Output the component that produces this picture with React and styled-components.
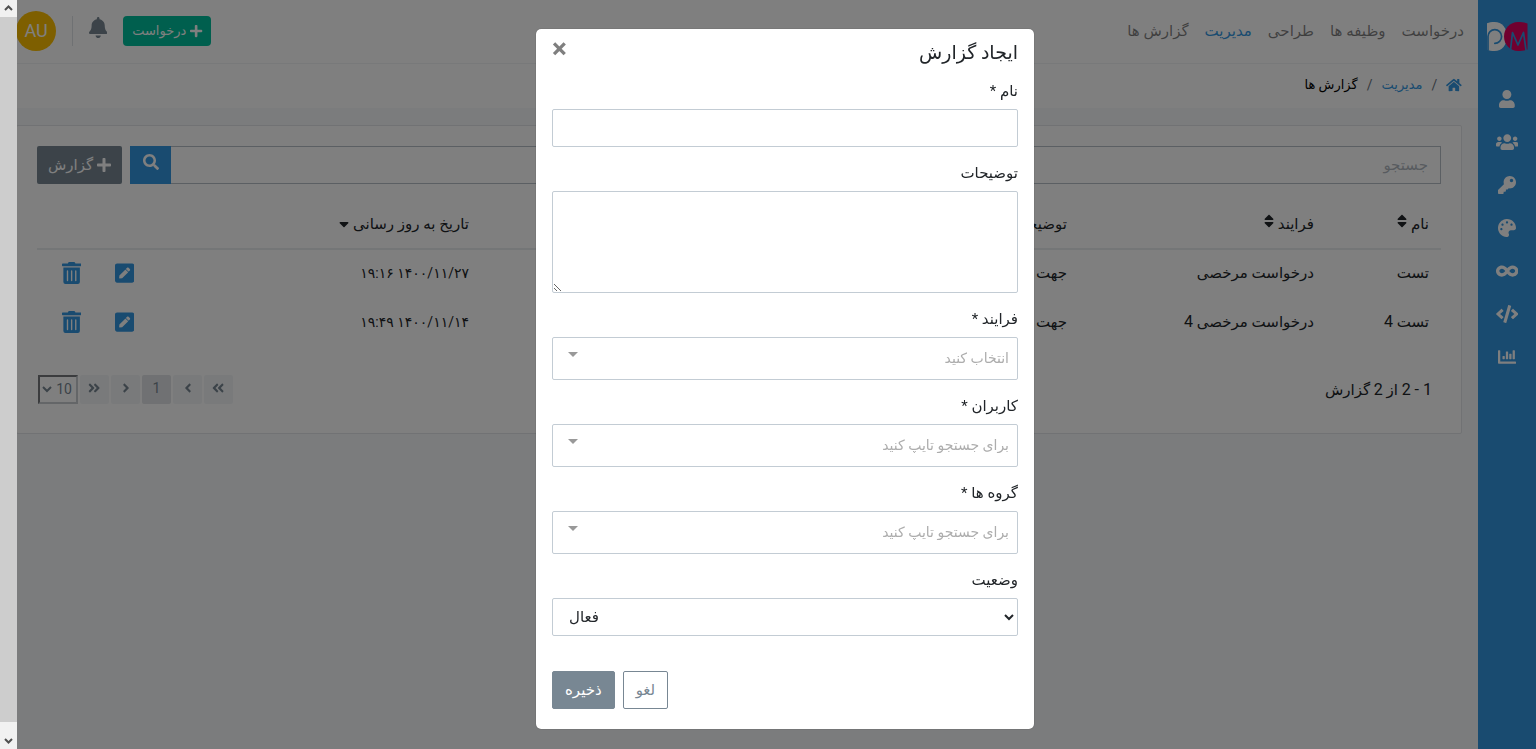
import { useState } from "react";
import styled, { createGlobalStyle } from "styled-components";
import {
  FaAngleDoubleLeft,
  FaAngleDoubleRight,
  FaAngleLeft,
  FaAngleRight,
  FaBell,
  FaChartBar,
  FaCode,
  FaHome,
  FaInfinity,
  FaKey,
  FaPalette,
  FaPenSquare,
  FaPlus,
  FaSearch,
  FaSort,
  FaSortDown,
  FaTrashAlt,
  FaUser,
  FaUsers,
} from "react-icons/fa";

const GlobalStyle = createGlobalStyle`
  * {
    box-sizing: border-box;
  }
  body {
    margin: 0;
    overflow: hidden;
    background: #f7f9fa;
    color: #212529;
    font-family: Roboto, "DejaVu Sans", sans-serif;
    font-size: 15px;
    line-height: 24px;
  }
  button, input, select, textarea {
    font-family: inherit;
    font-size: inherit;
    line-height: inherit;
    margin: 0;
  }
  button {
    cursor: pointer;
  }
  a {
    text-decoration: none;
  }
  /* keep the natural width of every icon */
  svg[viewBox="0 0 640 512"] {
    width: 1.25em;
  }
  svg[viewBox="0 0 576 512"] {
    width: 1.125em;
  }
  svg[viewBox="0 0 448 512"] {
    width: 0.875em;
  }
  svg[viewBox="0 0 320 512"] {
    width: 0.625em;
  }
`;

const Page = styled.div`
  display: flex;
  min-height: 100vh;
`;

const Sidebar = styled.nav`
  display: flex;
  flex-direction: column;
  align-items: center;
  width: 58px;
  padding-top: 22px;
  background: #3397e1;
`;

const LogoLink = styled.a`
  display: flex;
  margin-bottom: 26px;
`;

const SideLink = styled.a`
  display: flex;
  align-items: center;
  justify-content: center;
  width: 100%;
  height: 43px;
  color: #fff;
  font-size: 18px;
`;

const Main = styled.div`
  flex: 1;
  min-width: 0;
`;

const Header = styled.header`
  display: flex;
  align-items: center;
  justify-content: space-between;
  height: 64px;
  padding: 0 14px 2px 16px;
  background: #fff;
  border-bottom: 1px solid #f0f2f4;
`;

const Menu = styled.nav`
  display: flex;
  gap: 16px;
`;

const MenuLink = styled.a`
  color: ${(props) => (props.$active ? "#3397e1" : "rgba(0, 0, 0, 0.5)")};
`;

const HeaderTools = styled.div`
  display: flex;
  align-items: center;
`;

const RequestButton = styled.button`
  display: flex;
  align-items: center;
  justify-content: center;
  gap: 4px;
  min-width: 88px;
  height: 30px;
  padding: 0 8px;
  border: 0;
  border-radius: 4px;
  background: #00bf9c;
  color: #fff;
  font-size: 13px;
  svg {
    font-size: 14px;
  }
`;

const BellButton = styled.button`
  display: flex;
  margin: 0 16px 6px;
  padding: 0;
  border: 0;
  background: none;
  color: #788793;
  font-size: 21px;
`;

const Avatar = styled.div`
  display: flex;
  align-items: center;
  justify-content: center;
  width: 40px;
  height: 40px;
  margin-right: 16px;
  border-radius: 50%;
  background: #fcbe00;
  color: #fff;
  font-size: 18px;
`;

const Divider = styled.span`
  width: 1px;
  height: 30px;
  background: #dee2e6;
`;

const Breadcrumb = styled.nav`
  display: flex;
  align-items: center;
  gap: 9px;
  height: 44px;
  padding: 0 16px 2px;
  background: #fff;
  color: #6c757d;
  font-size: 13px;
  a {
    display: flex;
    color: #3397e1;
  }
  svg {
    font-size: 14px;
  }
`;

const Current = styled.span`
  color: #000;
`;

const Slash = styled.span`
  font-size: 14px;
`;

const Card = styled.section`
  margin: 17px 16px;
  padding: 20px 20px 29px;
  border: 1px solid #e2e5e8;
  border-radius: 2px;
  background: #fff;
`;

const SearchRow = styled.form`
  display: flex;
  height: 38px;
  margin-bottom: 15px;
`;

const SearchInput = styled.input`
  flex: 1;
  min-width: 0;
  padding: 0 12px;
  border: 1px solid #b6bfc6;
  border-left: 0;
  background: #fff;
  &::placeholder {
    color: #b0b7be;
  }
`;

const SearchButton = styled.button`
  width: 41px;
  padding: 0;
  border: 0;
  background: #3397e1;
  color: #fff;
  font-size: 16px;
`;

const AddButton = styled.button`
  display: flex;
  align-items: center;
  justify-content: center;
  gap: 4px;
  min-width: 85px;
  margin-right: 8px;
  padding: 0 11px;
  border: 0;
  border-radius: 2px;
  background: #788793;
  color: #fff;
  svg {
    font-size: 16px;
  }
`;

const Table = styled.table`
  width: 100%;
  table-layout: fixed;
  border-collapse: collapse;
`;

const Col = styled.col`
  width: ${(props) => props.$width};
`;

const Th = styled.th`
  height: 50px;
  padding: 0 12px;
  border-bottom: 2px solid #e9ecef;
  font-weight: normal;
  text-align: right;
  white-space: nowrap;
  svg {
    font-size: 16px;
    vertical-align: baseline;
  }
`;

const Td = styled.td`
  height: 50px;
  padding: 0 12px 4px;
  white-space: nowrap;
`;

const DateText = styled.span`
  font-size: 14px;
`;

const Latin = styled.span`
  font-size: 16px;
`;

const Actions = styled.div`
  display: flex;
  justify-content: flex-end;
  gap: 8px;
`;

const ActionButton = styled.button`
  display: flex;
  justify-content: center;
  width: 45px;
  padding: 0;
  border: 0;
  background: none;
  color: #3397e1;
  font-size: 22px;
`;

const TableFooter = styled.div`
  display: flex;
  align-items: center;
  justify-content: space-between;
  margin-top: 26px;
  padding: 0 9px 0 1px;
`;

const Pager = styled.div`
  display: flex;
  gap: 2px;
`;

const PageButton = styled.button`
  display: flex;
  align-items: center;
  justify-content: center;
  width: 29px;
  height: 29px;
  padding: 0 0 4px;
  border: 0;
  border-radius: 2px;
  background: ${(props) => (props.$active ? "#e0e3e6" : "#f3f5f7")};
  color: #788793;
  font-size: 14px;
`;

const PageSize = styled.select`
  width: 40px;
  height: 29px;
  padding: 0 0 2px;
  border: 2px inset #c8ccd0;
  background: #fff;
  color: #788793;
  font-size: 14px;
`;

const Backdrop = styled.div`
  position: fixed;
  inset: 0 0 0 17px;
  display: flex;
  align-items: flex-start;
  justify-content: center;
  padding: 29px 0 0 17px;
  background: rgba(0, 0, 0, 0.5);
`;

const Modal = styled.form`
  width: 498px;
  padding: 9px 16px 20px;
  border-radius: 5px;
  background: #fff;
  box-shadow: 0 0 1px rgba(0, 0, 0, 0.6);
`;

const ModalHeader = styled.div`
  display: flex;
  align-items: flex-start;
  justify-content: space-between;
  height: 43px;
`;

const ModalTitle = styled.h5`
  margin: 0;
  font-size: 19px;
  font-weight: normal;
  line-height: 30px;
`;

const CloseButton = styled.button`
  padding: 0;
  border: 0;
  background: none;
  color: #7f7f7f;
  font-size: 28px;
  font-weight: bold;
  line-height: 22px;
`;

const Group = styled.div`
  margin-bottom: 16px;
`;

const Label = styled.label`
  display: block;
  margin-bottom: 8px;
  line-height: 20px;
`;

const TextInput = styled.input`
  display: block;
  width: 100%;
  height: 38px;
  padding: 6px 12px;
  border: 1px solid #c3ccd4;
  border-radius: 2px;
`;

const TextArea = styled.textarea`
  display: block;
  width: 100%;
  height: 102px;
  padding: 6px 12px;
  border: 1px solid #c3ccd4;
  border-radius: 2px;
  resize: vertical;
`;

const Combo = styled.div`
  display: flex;
  align-items: flex-start;
  height: 43px;
  padding: 8px 8px 0 15px;
  border: 1px solid #c3ccd4;
  border-radius: 2px;
  background: #fff;
`;

const ComboInput = styled.input`
  flex: 1;
  min-width: 0;
  height: 24px;
  padding: 0;
  border: 0;
  outline: 0;
  font-size: 14px;
  &::placeholder {
    color: #adadad;
  }
`;

const Caret = styled.span`
  margin-top: 6px;
  border: 5px solid transparent;
  border-top-color: #999;
  border-bottom: 0;
`;

const StatusSelect = styled.select`
  display: block;
  direction: ltr;
  width: 100%;
  height: 38px;
  padding: 6px 12px;
  border: 1px solid #c3ccd4;
  border-radius: 2px;
  background: #fff;
  color: #212529;
`;

const ModalFooter = styled.div`
  display: flex;
  justify-content: flex-end;
  gap: 8px;
  padding-top: 19px;
`;

const FormButton = styled.button`
  height: 38px;
  padding: 0 12px;
  border: 1px solid #788793;
  border-radius: 2px;
  background: ${(props) => (props.$primary ? "#788793" : "#fff")};
  color: ${(props) => (props.$primary ? "#fff" : "#788793")};
`;

const ScrollTrack = styled.div`
  position: fixed;
  inset: 0 auto 0 0;
  display: flex;
  flex-direction: column;
  width: 17px;
  background: #f1f1f1;
  svg {
    display: block;
  }
`;

const ScrollThumb = styled.div`
  flex: 1;
  margin-bottom: 10px;
  background: #cdcdcd;
`;

const Logo = () => (
  <svg width="41" height="29" viewBox="0 0 41 29" aria-label="PM">
    <path d="M0 1.2C2 .4 4.500 0 7.500 0 15 0 20 6 20 14.500S15 29 7.500 29C4.500 29 2 28.600 0 27.800z" fill="#fff" />
    <path d="M40.500 1.500V27.500C37.800 28.600 34.500 29 31 29 23 29 17 22.500 17 14.500S23 0 31 0c3.500 0 6.800.4 9.500 1.500z" fill="#e0005f" />
    <g fill="none" stroke="#3397e1" strokeWidth="1.700" strokeLinecap="round" strokeLinejoin="round">
      <path d="M1 28V14.500a6.800 6.800 0 1 1 6.800 6.800" />
      <path d="M23.500 28 25.500 10.500 31 23 36.500 10.500 39 28" />
    </g>
  </svg>
);

const ScrollArrow = ({ down }) => (
  <svg width="17" height="17" viewBox="0 0 17 17">
    <path
      d={down ? "M5 7l3.500 3.500L12 7" : "M5 10l3.500-3.500L12 10"}
      fill="none"
      stroke="#505050"
      strokeWidth="2"
    />
  </svg>
);

const menu = ["درخواست", "وظیفه ها", "طراحی", "مدیریت", "گزارش ها"];

const sideLinks = [
  { title: "کاربران", Icon: FaUser },
  { title: "گروه ها", Icon: FaUsers },
  { title: "کلیدها", Icon: FaKey },
  { title: "ظاهر", Icon: FaPalette },
  { title: "صف ها", Icon: FaInfinity },
  { title: "اسکریپت ها", Icon: FaCode },
  { title: "گزارش ها", Icon: FaChartBar },
];

const reports = [
  { id: 1, name: "تست", process: "درخواست مرخصی", description: "جهت", date: "۱۴۰۰/۱۱/۲۷ ۱۹:۱۶" },
  { id: 2, name: "تست", process: "درخواست مرخصی", number: 4, description: "جهت", date: "۱۴۰۰/۱۱/۱۴ ۱۹:۴۹" },
];

const combos = [
  { id: "process", label: "فرایند *", placeholder: "انتخاب کنید" },
  { id: "users", label: "کاربران *", placeholder: "برای جستجو تایپ کنید" },
  { id: "groups", label: "گروه ها *", placeholder: "برای جستجو تایپ کنید" },
];

const CreateReport = ({ onClose }) => {
  return (
    <Backdrop>
      <Modal role="dialog" aria-labelledby="modal-title" onSubmit={(e) => e.preventDefault()}>
        <ModalHeader>
          <ModalTitle id="modal-title">ایجاد گزارش</ModalTitle>
          <CloseButton type="button" aria-label="بستن" onClick={onClose}>×</CloseButton>
        </ModalHeader>
        <Group>
          <Label htmlFor="name">نام *</Label>
          <TextInput id="name" name="name" />
        </Group>
        <Group>
          <Label htmlFor="description">توضیحات</Label>
          <TextArea id="description" name="description" />
        </Group>
        {combos.map((item) => (
          <Group key={item.id}>
            <Label htmlFor={item.id}>{item.label}</Label>
            <Combo>
              <ComboInput id={item.id} role="combobox" aria-expanded="false" placeholder={item.placeholder} />
              <Caret />
            </Combo>
          </Group>
        ))}
        <Group>
          <Label htmlFor="status">وضعیت</Label>
          <StatusSelect id="status" defaultValue="active">
            <option value="active">فعال</option>
            <option value="inactive">غیرفعال</option>
          </StatusSelect>
        </Group>
        <ModalFooter>
          <FormButton type="button" onClick={onClose}>لغو</FormButton>
          <FormButton type="submit" $primary>ذخیره</FormButton>
        </ModalFooter>
      </Modal>
    </Backdrop>
  );
};

const App = () => {
  const [open, setOpen] = useState(true);

  return (
    <>
      <GlobalStyle />
      <Page dir="rtl" lang="fa">
        <Sidebar>
          <LogoLink href="#">
            <Logo />
          </LogoLink>
          {sideLinks.map(({ title, Icon }) => (
            <SideLink href="#" key={title} aria-label={title}>
              <Icon />
            </SideLink>
          ))}
        </Sidebar>
        <Main>
          <Header>
            <Menu>
              {menu.map((item) => (
                <MenuLink href="#" key={item} $active={item === "مدیریت"}>{item}</MenuLink>
              ))}
            </Menu>
            <HeaderTools>
              <RequestButton type="button"><FaPlus />درخواست</RequestButton>
              <BellButton type="button" aria-label="اعلان ها"><FaBell /></BellButton>
              <Divider />
              <Avatar>AU</Avatar>
            </HeaderTools>
          </Header>
          <Breadcrumb>
            <a href="#" aria-label="خانه"><FaHome /></a>
            <Slash>/</Slash>
            <a href="#">مدیریت</a>
            <Slash>/</Slash>
            <Current>گزارش ها</Current>
          </Breadcrumb>
          <Card>
            <SearchRow onSubmit={(e) => e.preventDefault()}>
              <SearchInput aria-label="جستجو" placeholder="جستجو" />
              <SearchButton type="submit" aria-label="جستجو"><FaSearch /></SearchButton>
              <AddButton type="button" onClick={() => setOpen(true)}><FaPlus />گزارش</AddButton>
            </SearchRow>
            <Table>
              <colgroup>
                <Col $width="115px" />
                <Col $width="247px" />
                <Col />
                <Col $width="247px" />
                <Col $width="197px" />
              </colgroup>
              <thead>
                <tr>
                  <Th>نام <FaSort /></Th>
                  <Th>فرایند <FaSort /></Th>
                  <Th>توضیحات <FaSort /></Th>
                  <Th>تاریخ به روز رسانی <FaSortDown /></Th>
                  <Th />
                </tr>
              </thead>
              <tbody>
                {reports.map((item) => (
                  <tr key={item.id}>
                    <Td>{item.name} <Latin>{item.number}</Latin></Td>
                    <Td>{item.process} <Latin>{item.number}</Latin></Td>
                    <Td>{item.description}</Td>
                    <Td><DateText>{item.date}</DateText></Td>
                    <Td>
                      <Actions>
                        <ActionButton type="button" aria-label="ویرایش"><FaPenSquare /></ActionButton>
                        <ActionButton type="button" aria-label="حذف"><FaTrashAlt /></ActionButton>
                      </Actions>
                    </Td>
                  </tr>
                ))}
              </tbody>
            </Table>
            <TableFooter>
              <span><Latin>1 - 2</Latin> از <Latin>2</Latin> گزارش</span>
              <Pager>
                <PageButton type="button" aria-label="اولین"><FaAngleDoubleLeft /></PageButton>
                <PageButton type="button" aria-label="قبلی"><FaAngleLeft /></PageButton>
                <PageButton type="button" $active>1</PageButton>
                <PageButton type="button" aria-label="بعدی"><FaAngleRight /></PageButton>
                <PageButton type="button" aria-label="آخرین"><FaAngleDoubleRight /></PageButton>
                <PageSize aria-label="تعداد در صفحه" defaultValue="10">
                  <option>10</option>
                  <option>25</option>
                </PageSize>
              </Pager>
            </TableFooter>
          </Card>
        </Main>
        {open && <CreateReport onClose={() => setOpen(false)} />}
        <ScrollTrack aria-hidden="true">
          <ScrollArrow />
          <ScrollThumb />
          <ScrollArrow down />
        </ScrollTrack>
      </Page>
    </>
  );
};

export default App;
